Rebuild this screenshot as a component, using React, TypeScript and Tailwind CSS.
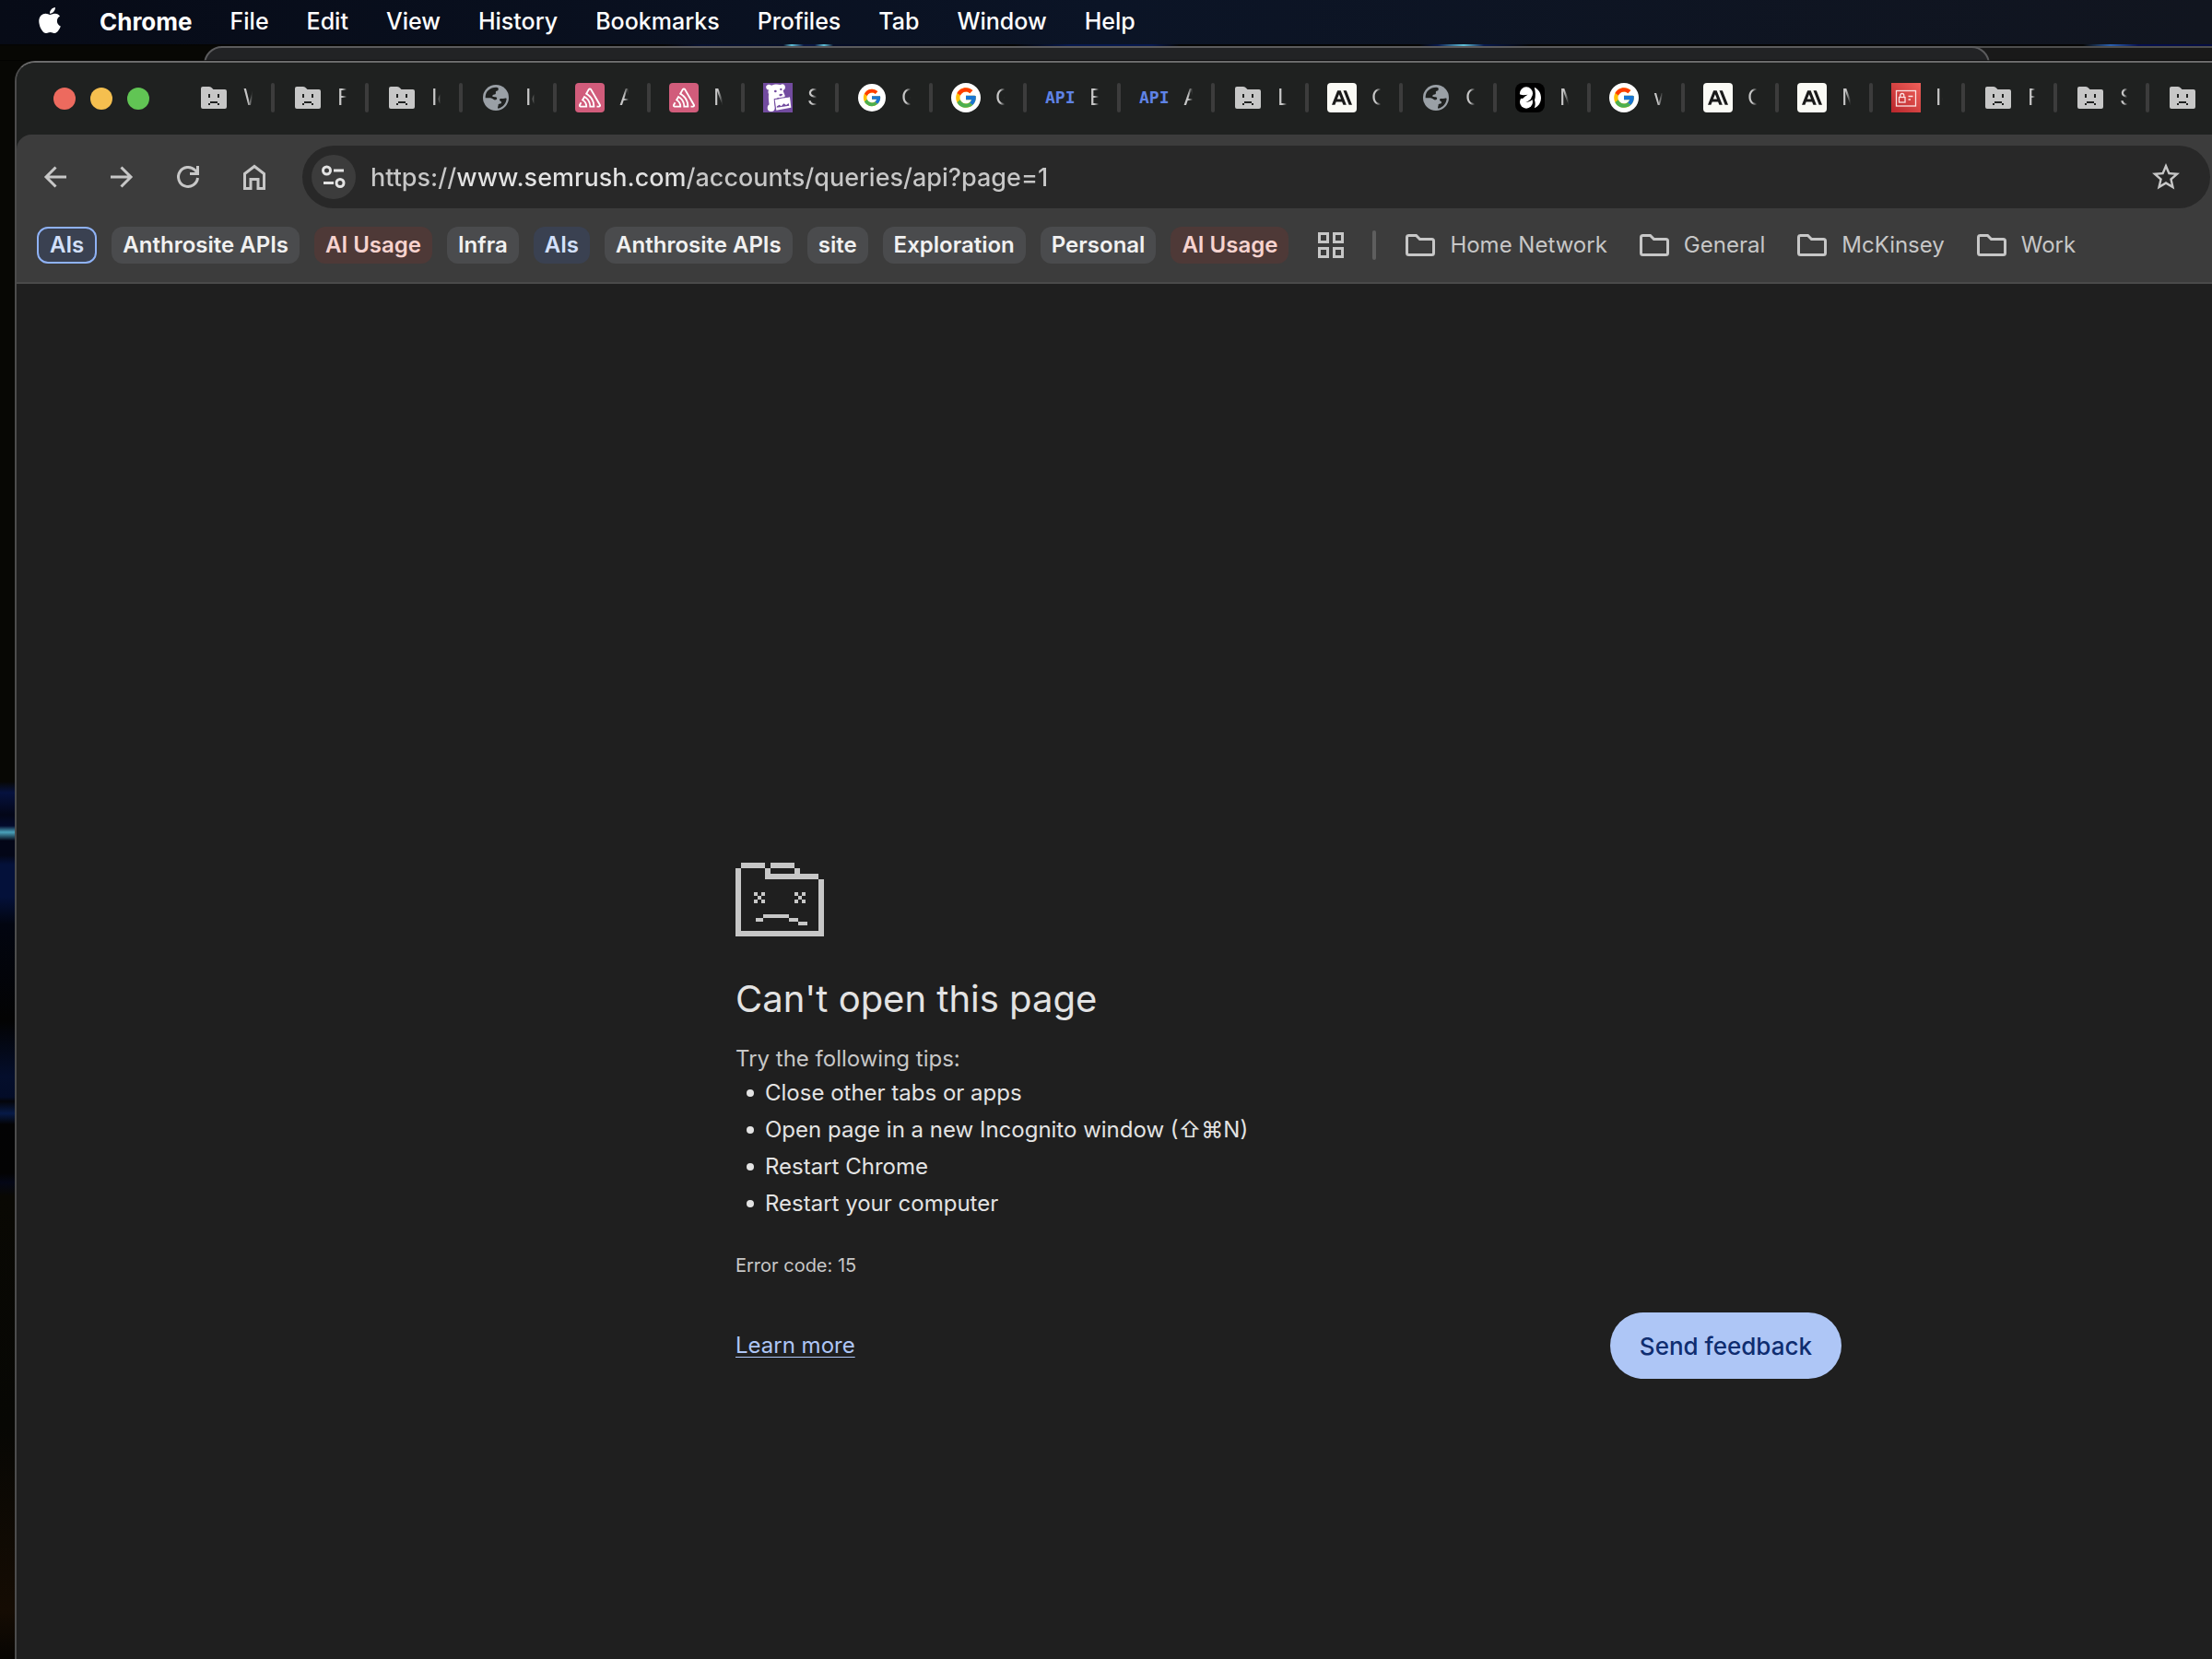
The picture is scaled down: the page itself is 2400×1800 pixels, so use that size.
import type { ReactNode } from "react";
import { FaApple } from "react-icons/fa";
import { FcGoogle } from "react-icons/fc";
import { MdStarOutline } from "react-icons/md";
import { SiAnthropic, SiSentry } from "react-icons/si";

const menus = ["File", "Edit", "View", "History", "Bookmarks", "Profiles", "Tab", "Window", "Help"];

function DeadFolder() {
  return (
    <svg viewBox="0 0 32 32" className="size-8">
      <path
        fill="#c7c7c7"
        d="M4 4h7q2 0 3 1.500l1.500 1.500H28q2 0 2 2v17q0 2-2 2H4q-2 0-2-2V6q0-2 2-2z"
      />
      <path fill="#1f2120" d="M10 12h2v4h-2zM20 12h2v4h-2zM12 20h8v2h-8zM10 22h2v2h-2zM20 22h2v2h-2z" />
    </svg>
  );
}

function Globe() {
  return (
    <svg viewBox="0 0 96 96" className="size-8">
      <circle cx="48" cy="48" r="42" fill="#9aa0a6" />
      <g fill="#1f2120">
        <path d="M14 44C15 27 29 14 49 14c6 0 8 2 7 8-1 5-6 3-8 6-2 4 2 6-2 9-4 2-8 0-9 5-1 4 6 3 10 4 7 1 5 9 0 9-6 1-7-4-12-5-6-2-13-1-21-1z" />
        <path d="M83 51c-2 17-12 29-28 32-3-4 2-7 1-13 3-2 9 0 10-6 1-5-6-4-6-9 0-6 7-4 12-4 4 0 7-3 11 0z" />
      </g>
    </svg>
  );
}

function Sentry() {
  return (
    <span className="grid size-8 place-items-center rounded bg-[#d15c7b] text-white">
      <SiSentry className="size-6" />
    </span>
  );
}

function Datadog() {
  return (
    <svg viewBox="0 0 96 96" className="size-8">
      <rect width="96" height="96" fill="#724b9f" />
      <g fill="#fff">
        <path d="M10 10c4-6 12-6 17-2 8-4 20-5 30-2 5-4 12-2 14 4 2 7 0 13-6 14 1 7 4 11 6 17 1 7-6 12-14 11-3 0-6-2-8-5-4 5-10 6-14 5l2 24c-5 3-11 3-16 0-3-13-4-28-3-40-3-5-1-10 0-14-6 2-10-6-8-12z" />
        <circle cx="26" cy="81" r="12" />
        <path d="M38 54l49-8 4 34-48 9z" />
      </g>
      <path fill="#724b9f" d="M44 80l1-4 8-5 6 5 8-9 8 5 8-6 2 8z" />
      <circle cx="40" cy="27" r="4" fill="#724b9f" />
      <circle cx="58" cy="21" r="3.500" fill="#724b9f" />
      <path d="M51 39q7-6 13-2-3 7-9 6z" fill="#724b9f" />
      <path d="M36 53l50-9" stroke="#724b9f" strokeWidth="3" />
    </svg>
  );
}

function Google({ small }: { small?: boolean }) {
  return (
    <span className="grid size-8 place-items-center">
      <span className={small ? "grid size-[30px] place-items-center rounded-full bg-white" : "grid size-8 place-items-center rounded-full bg-white"}>
        <FcGoogle className={small ? "size-[22px]" : "size-[26px]"} />
      </span>
    </span>
  );
}

function Api() {
  return (
    <span className="grid size-8 place-items-center font-['DejaVu_Sans_Mono',monospace] text-[18px] leading-8 font-bold text-[#5f83e6]">
      API
    </span>
  );
}

function Anthropic() {
  return (
    <span className="grid size-8 place-items-center rounded bg-[#fafaf5] text-[#191919]">
      <SiAnthropic className="size-[22px]" />
    </span>
  );
}

function Swirl() {
  return (
    <svg viewBox="0 0 96 96" className="size-8">
      <rect width="96" height="96" rx="24" fill="#000" />
      <g fill="#fff">
        <circle cx="36" cy="34" r="21" />
        <circle cx="36" cy="62" r="21" />
        <path d="M36 34h19q0 20-19 28z" />
        <path d="M62 14c14 6 22 19 22 34S76 77 62 82c4-9 4-18 1-26 4-12 3-30-1-42z" />
      </g>
      <path fill="#000" d="M10 37c10 3 20 3 31 1-7 4-13 8-17 13-5-1-10-2-14-1zM61 48c-6 9-15 14-27 15 9-3 17-9 22-18z" />
      <path d="M60 12v72" stroke="#000" strokeWidth="3" />
    </svg>
  );
}

function Identity() {
  return (
    <svg viewBox="0 0 32 32" className="size-8">
      <defs>
        <linearGradient id="identity" x1="0" y1="1" x2="1" y2="0">
          <stop offset="0" stopColor="#b8262b" />
          <stop offset="1" stopColor="#f0605a" />
        </linearGradient>
      </defs>
      <rect width="32" height="32" fill="url(#identity)" />
      <g fill="none" stroke="#fbe4e4" strokeWidth="1.300">
        <rect x="5.500" y="8.500" width="21" height="16.500" />
        <rect x="8.500" y="15.500" width="6.500" height="5.500" />
        <path d="M9.800 15.500v-2a2 2 0 0 1 4 0v2M18.500 14.500h5M18.500 18h2.500" />
      </g>
    </svg>
  );
}

const tabs: { icon: ReactNode; label: string }[] = [
  { icon: <DeadFolder />, label: "W" },
  { icon: <DeadFolder />, label: "F" },
  { icon: <DeadFolder />, label: "Ic" },
  { icon: <Globe />, label: "Ic" },
  { icon: <Sentry />, label: "A" },
  { icon: <Sentry />, label: "M" },
  { icon: <Datadog />, label: "S" },
  { icon: <Google small />, label: "G" },
  { icon: <Google />, label: "G" },
  { icon: <Api />, label: "E" },
  { icon: <Api />, label: "A" },
  { icon: <DeadFolder />, label: "L" },
  { icon: <Anthropic />, label: "C" },
  { icon: <Globe />, label: "C" },
  { icon: <Swirl />, label: "M" },
  { icon: <Google />, label: "w" },
  { icon: <Anthropic />, label: "C" },
  { icon: <Anthropic />, label: "M" },
  { icon: <Identity />, label: "Ic" },
  { icon: <DeadFolder />, label: "F" },
  { icon: <DeadFolder />, label: "S" },
  { icon: <DeadFolder />, label: "" },
];

const FIRST_NARROW_TAB = 18;

function TabStrip() {
  return (
    <div className="flex h-[78px] items-center overflow-hidden bg-[#1f2120] pb-0.5">
      <div className="ml-10 flex shrink-0 gap-4 pt-0.5">
        <button aria-label="Close" className="size-6 rounded-full bg-[#ed6a5e]" />
        <button aria-label="Minimize" className="size-6 rounded-full bg-[#f5bf4f]" />
        <button aria-label="Zoom" className="size-6 rounded-full bg-[#61c554]" />
      </div>
      <div role="tablist" className="ml-[34px] flex shrink-0 items-center">
        {tabs.map((tab, i) => (
          <button
            key={i}
            role="tab"
            aria-selected="false"
            aria-label={`Tab ${i + 1}`}
            className="flex h-8 shrink-0 items-center pl-5"
          >
            {tab.icon}
            <span
              className={
                i < FIRST_NARROW_TAB
                  ? "ml-4 h-8 w-2.5 overflow-hidden mask-r-from-50% text-left text-[24px] leading-8 text-[#c7c7c7]"
                  : "ml-4 h-8 w-2 overflow-hidden mask-r-from-50% text-left text-[24px] leading-8 text-[#c7c7c7]"
              }
            >
              {tab.label}
            </span>
            <span className="ml-5 h-8 w-1 rounded-sm bg-[#3c3c3c]" />
          </button>
        ))}
      </div>
    </div>
  );
}

function ToolButton({ label, children }: { label: string; children: ReactNode }) {
  return (
    <button aria-label={label} className="grid size-9 place-items-center">
      <svg viewBox="0 0 36 36" className="size-9" fill="none" stroke="#c7c7c7" strokeWidth="3">
        {children}
      </svg>
    </button>
  );
}

function Toolbar() {
  return (
    <div className="flex h-23 items-center pr-0.5 pl-6">
      <div className="flex shrink-0 gap-9">
        <ToolButton label="Back">
          <path d="M30 18H8M18.500 7.500L8 18l10.500 10.500" />
        </ToolButton>
        <ToolButton label="Forward">
          <path d="M6 18h22M17.500 7.500L28 18 17.500 28.500" />
        </ToolButton>
        <ToolButton label="Reload">
          <path d="M28.500 19A10.500 10.500 0 1 1 25.500 10.500L28 13M28.500 6v8.500H20" />
        </ToolButton>
        <ToolButton label="Home">
          <path d="M7.500 14.500L18 6.500l10.500 8v16H22v-10h-8v10H7.500z" />
        </ToolButton>
      </div>
      <div className="ml-[34px] flex h-17 flex-1 items-center rounded-full bg-[#282828] pl-2.5">
        <button aria-label="View site information" className="grid size-12 shrink-0 place-items-center rounded-full bg-[#3c3c3c]">
          <svg viewBox="0 0 48 48" className="size-12" fill="none" stroke="#e3e3e3" strokeWidth="3">
            <circle cx="16.500" cy="17" r="4" />
            <path d="M24 17h11M13 30.500h11" />
            <circle cx="31" cy="30.500" r="4" />
          </svg>
        </button>
        <input
          aria-label="Address and search bar"
          defaultValue="https://www.semrush.com/accounts/queries/api?page=1"
          spellCheck={false}
          className="ml-4 h-12 min-w-0 flex-1 bg-[linear-gradient(90deg,#c7c7c7_93px,#e3e3e3_93px,#e3e3e3_342px,#c7c7c7_342px)] bg-clip-text text-[27px] font-medium text-transparent outline-none"
        />
        <button aria-label="Bookmark this tab" className="mr-[30px] grid size-9 shrink-0 place-items-center text-[#c7c7c7]">
          <MdStarOutline className="size-9" />
        </button>
      </div>
    </div>
  );
}

const gray = "h-10 shrink-0 rounded-xl bg-[#4a4b4d] px-3 text-[#f1f1f1]";
const red = "h-10 shrink-0 rounded-xl bg-[#4e3937] px-3 text-[#f7d3cf]";
const blue = "h-10 shrink-0 rounded-xl bg-[#3a4151] px-3 text-[#d3e0fb]";
const blueOpen = "h-10 shrink-0 rounded-xl border-2 border-[#8fb2f5] bg-[#3a4151] px-3 text-[#d3e0fb]";

const groups = [
  { label: "AIs", style: blueOpen },
  { label: "Anthrosite APIs", style: gray },
  { label: "AI Usage", style: red },
  { label: "Infra", style: gray },
  { label: "AIs", style: blue },
  { label: "Anthrosite APIs", style: gray },
  { label: "site", style: gray },
  { label: "Exploration", style: gray },
  { label: "Personal", style: gray },
  { label: "AI Usage", style: red },
];

function BookmarksBar() {
  return (
    <div className="flex h-[70px] items-start overflow-hidden border-b-2 border-[#4a4a4a] pt-2 pl-[22px]">
      <div className="flex shrink-0 gap-4 text-[24px] font-semibold">
        {groups.map((group, i) => (
          <button key={i} className={group.style}>
            {group.label}
          </button>
        ))}
      </div>
      <button aria-label="Apps" className="ml-8 grid h-10 shrink-0 place-items-center">
        <svg viewBox="0 0 28 28" className="size-7" fill="none" stroke="#c7c7c7" strokeWidth="3">
          <path d="M1.500 1.500h9v9h-9zM17.500 1.500h9v9h-9zM1.500 17.500h9v9h-9zM17.500 17.500h9v9h-9z" />
        </svg>
      </button>
      <span className="mt-1 ml-[31px] h-8 w-1 shrink-0 rounded-sm bg-[#5e5e5e]" />
      <div className="ml-8 flex shrink-0 gap-[35px] text-[24px] text-[#c7c7c7]">
        {["Home Network", "General", "McKinsey", "Work"].map((name) => (
          <button key={name} className="flex h-10 items-center gap-4">
            <svg viewBox="0 0 32 24" className="h-6 w-8" fill="none" stroke="#c7c7c7" strokeWidth="3">
              <path d="M3.500 1.500h8l4 4h13q2 0 2 2v13q0 2-2 2h-25q-2 0-2-2v-17q0-2 2-2z" />
            </svg>
            {name}
          </button>
        ))}
      </div>
    </div>
  );
}

function SadFolder() {
  return (
    <svg viewBox="0 0 96 80" className="h-20 w-24" fill="#c7c7c7" shapeRendering="crispEdges">
      <path d="M6 0h26v6H6zM0 6h6v74H0zM38 0h26v6H38zM32 6h6v6h-6zM64 6h6v6h-6zM32 12h58v6H32zM90 18h6v62h-6zM6 74h84v6H6z" />
      <path d="M20 32h4v4h-4zM28 32h4v4h-4zM24 36h4v4h-4zM20 40h4v4h-4zM28 40h4v4h-4z" />
      <path d="M64 32h4v4h-4zM72 32h4v4h-4zM68 36h4v4h-4zM64 40h4v4h-4zM72 40h4v4h-4z" />
      <path d="M22 60h8v4h-8zM30 56h28v4H30zM58 60h10v4H58zM68 64h10v4H68z" />
    </svg>
  );
}

function ErrorPage() {
  return (
    <main className="flex-1 bg-[#1f1f1f] pt-[628px] pl-[780px] text-[#e3e3e3]">
      <div className="max-w-[1200px]">
        <SadFolder />
        <h1 className="mt-10 text-[40px] leading-[56px]">Can't open this page</h1>
        <p className="mt-5 text-[24px] leading-[34px] text-[#c7c7c7]">Try the following tips:</p>
        <ul className="text-[24px] leading-10">
          {[
            "Close other tabs or apps",
            "Open page in a new Incognito window (⇧⌘N)",
            "Restart Chrome",
            "Restart your computer",
          ].map((tip) => (
            <li key={tip} className="flex items-center gap-3 pl-3">
              <span className="size-2 rounded-full bg-[#e3e3e3]" />
              {tip}
            </li>
          ))}
        </ul>
        <p className="mt-[31px] text-[20px] leading-8 text-[#c7c7c7]">Error code: 15</p>
        <div className="mt-[35px] flex items-center justify-between">
          <a href="#learn-more" className="text-[24px] leading-8 text-[#aec6f6] underline decoration-1 underline-offset-4">
            Learn more
          </a>
          <button className="h-18 rounded-full bg-[#aec6f6] px-8 text-[26px] font-medium text-[#0f2d70]">
            Send feedback
          </button>
        </div>
      </div>
    </main>
  );
}

export default function App() {
  return (
    <div className="flex min-h-screen flex-col overflow-hidden bg-[#070704] font-[Inter,sans-serif]">
      <nav className="flex h-12 items-center bg-linear-to-r from-[#070b17] via-[#0b1426] to-[#11151f] pl-[38px] text-[25px] text-white">
        <button aria-label="Apple menu" className="-mt-1">
          <FaApple className="size-8" />
        </button>
        <button className="mb-0.5 ml-[38px] text-[26px] font-bold">Chrome</button>
        <div className="ml-[41px] flex gap-[41px] font-medium">
          {menus.map((menu) => (
            <button key={menu}>{menu}</button>
          ))}
        </div>
      </nav>
      <div className="relative flex flex-1 flex-col bg-[linear-gradient(180deg,#070704_800px,#06123f_812px,#030617_836px,#030a2c_848px,#4aa3bb_855px,#030617_864px,#030617_880px,#04113a_890px,#04113a_925px,#020510_955px,#030303_1060px,#040e2c_1120px,#030c28_1142px,#04050a_1147px,#071a47_1160px,#030304_1172px,#030303_1225px,#040716_1235px,#090803_1250px,#070704_1500px,#150c03_1700px,#070502_1752px)] pt-[18px] pl-4">
        <div className="absolute inset-x-0 top-0 h-0.5 bg-[linear-gradient(90deg,#050504_720px,#061030_760px,#050d28_850px,#5fc0d8_859px,#071440_872px,#071440_884px,#5fc0d8_894px,#050d28_904px,#050504_1100px,#06184e_1160px,#06184e_1250px,#050504_1280px,#050504_1540px,#06184e_1560px,#5fc0d8_1588px,#06184e_1610px,#050504_1660px,#050504_2260px,#2a60b0_2290px,#050f50_2320px,#050c40_2400px)]" />
        <div className="absolute top-0.5 right-0 left-[2100px] h-5 border-t-2 border-[#4e4e4e] bg-[#191919]" />
        <div className="absolute top-0.5 right-[241px] left-[221px] h-10 rounded-t-[20px] border-2 border-[#5b5b5d] bg-[#222325]" />
        <div className="absolute inset-x-0 top-[17px] h-px bg-black/70" />
        <section
          aria-label="Browser window"
          className="relative flex flex-1 flex-col overflow-hidden rounded-tl-[22px] border-t-2 border-l-2 border-t-[#6b6b6b] border-l-[#4c4c4c] bg-[#1f2120]"
        >
          <TabStrip />
          <div className="rounded-tl-2xl bg-[#3c3c3c]">
            <Toolbar />
            <BookmarksBar />
          </div>
          <ErrorPage />
        </section>
      </div>
    </div>
  );
}
